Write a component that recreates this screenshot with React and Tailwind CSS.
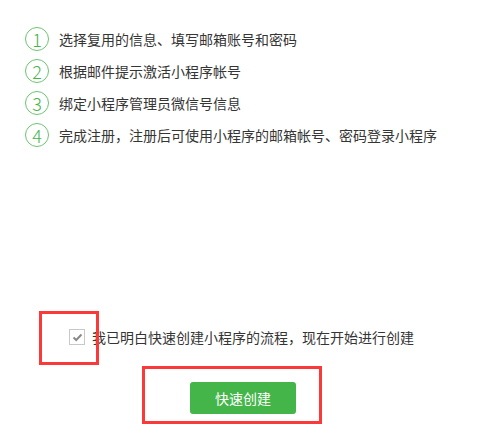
const steps = [
  '选择复用的信息、填写邮箱账号和密码',
  '根据邮件提示激活小程序帐号',
  '绑定小程序管理员微信号信息',
  '完成注册，注册后可使用小程序的邮箱帐号、密码登录小程序',
];

const font = { fontFamily: '"Microsoft YaHei", "Noto Sans CJK SC", sans-serif' };

export default function App() {
  return (
    <div
      className="relative w-[489px] h-[435px] bg-white text-[#353535] text-[14px] overflow-hidden flex flex-col"
      style={font}
    >
      <ul className="pt-[27px] pl-[25px] flex flex-col gap-[8px]">
        {steps.map((text, i) => (
          <li key={i} className="flex items-center gap-[10px] h-[24px]">
            <span className="w-[24px] h-[24px] rounded-full border border-[#6cc56f] text-[#44b549] text-[18px] font-light flex items-center justify-center leading-none shrink-0">
              {i + 1}
            </span>
            <span className="leading-[24px]">{text}</span>
          </li>
        ))}
      </ul>

      <div className="mt-auto pb-[21px] flex flex-col items-center">
        <label className="flex items-center gap-[7px] ml-[-6px]">
          <span className="w-[16px] h-[16px] border border-[#c8c8c8] bg-white flex items-center justify-center">
            <svg width="11" height="9" viewBox="0 0 11 9" fill="none">
              <path d="M1.5 4.5 L4.2 7 L9.5 1.5" stroke="#8a8a8a" strokeWidth="2" />
            </svg>
          </span>
          <span className="leading-[20px]">我已明白快速创建小程序的流程，现在开始进行创建</span>
        </label>
        <button className="mt-[35px] w-[106px] h-[32px] rounded-[3px] bg-[#44b549] text-white text-[14px] ml-[-3px]">
          快速创建
        </button>
      </div>

      <div className="absolute left-[39px] top-[311px] w-[60px] h-[54px] border-[3px] border-[#fc3939] pointer-events-none" />
      <div className="absolute left-[142px] top-[366px] w-[180px] h-[58px] border-[3px] border-[#fc3939] pointer-events-none" />
    </div>
  );
}
